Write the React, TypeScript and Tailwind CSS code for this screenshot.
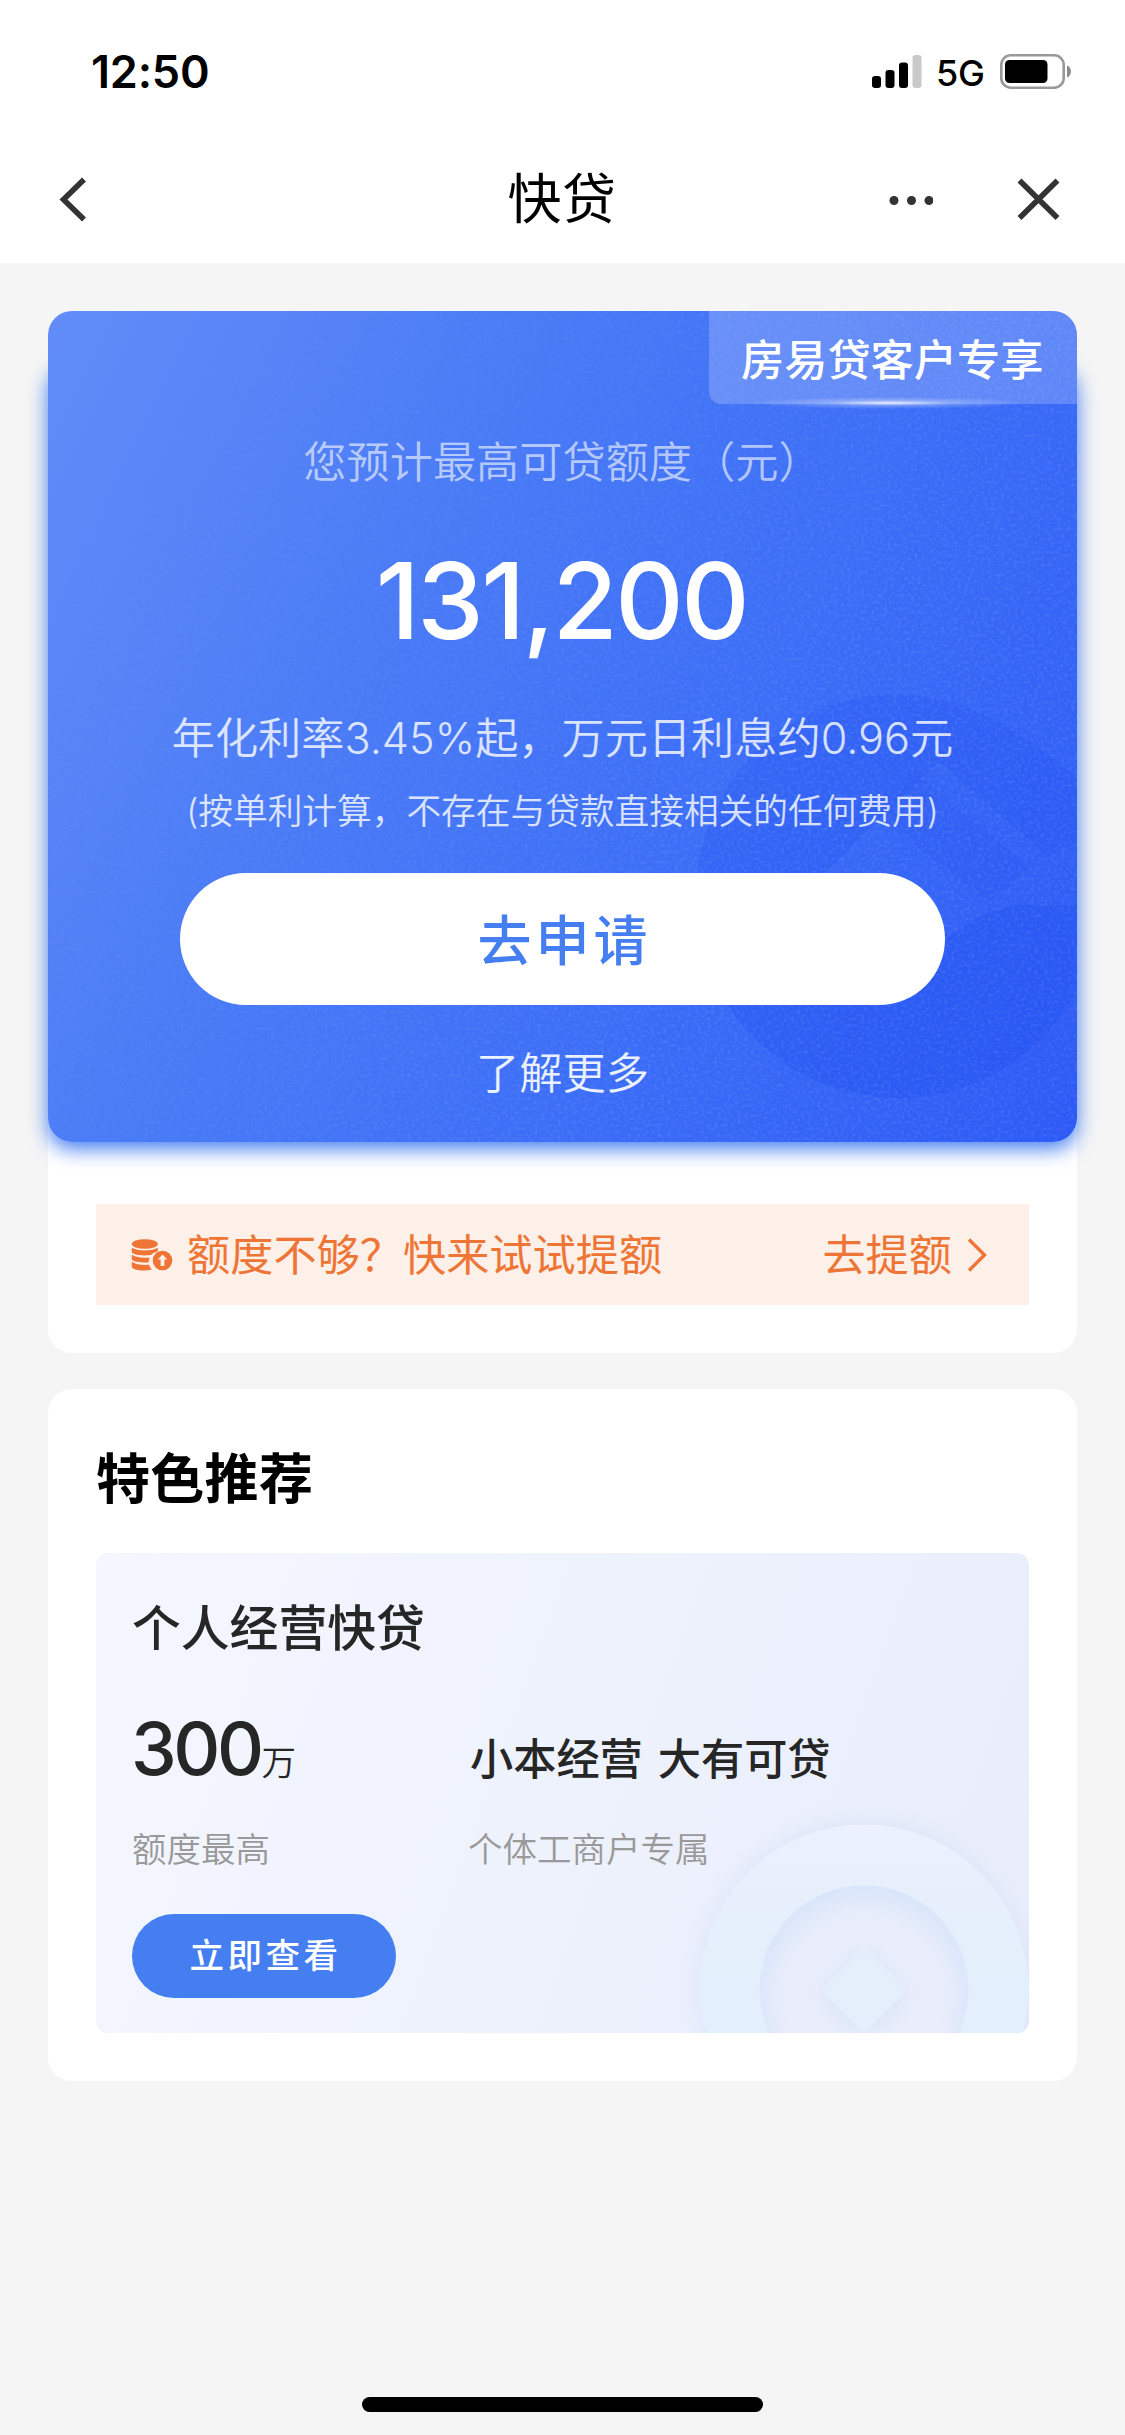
import React from "react";

const cjk = "font-['Inter','Noto_Sans_CJK_SC',sans-serif]";

function StatusBar() {
  return (
    <div className="flex h-[138px] items-start justify-between pl-[91px] pr-[50px] text-black">
      <span className="mt-[44px] text-[45px] font-semibold leading-[56px] tracking-[-0.2px]">12:50</span>
      <div className="mt-[50px] flex h-[42px] items-center">
        <svg className="h-[42px] w-[54px]" viewBox="0 0 54 42">
          <rect x="0" y="26" width="9" height="12" rx="3" />
          <rect x="13.5" y="20" width="9" height="18" rx="3" />
          <rect x="27" y="12.5" width="9" height="25.5" rx="3" />
          <rect x="40.5" y="5" width="9" height="33" rx="3" fill="#c9c9c9" />
        </svg>
        <span className="mt-[4px] w-[62px] pl-[10px] text-[36px] font-medium leading-[40px] tracking-[-0.2px]">5G</span>
        <svg className="ml-[11px] h-[42px] w-[76px]" viewBox="0 0 76 42">
          <rect x="2.3" y="5.3" width="62.4" height="32.4" rx="9.5" fill="none" stroke="#999" strokeWidth="2.6" />
          <rect x="6" y="10" width="42.5" height="23" rx="4.5" />
          <path d="M68 15.500c2.800 1.200 4 3.500 4 6s-1.200 4.800-4 6z" fill="#8c8c8c" />
        </svg>
      </div>
    </div>
  );
}

function NavBar() {
  return (
    <div className="flex h-[125px] items-start justify-between pl-[58px] pr-[64px] pt-[37px]">
      <svg className="h-[48px] w-[132px]" viewBox="0 0 132 48" fill="none" stroke="#333" strokeWidth="5.600">
        <path d="M26 4.500L5.500 24.500L26 44.500" />
      </svg>
      <h1 className="ml-[47px] mt-px text-[54px] font-normal leading-[48px] tracking-[0.500px] text-black">快贷</h1>
      <div className="flex h-[48px] w-[174px] items-center justify-between">
        <svg className="h-[48px] w-[46px]" viewBox="0 0 46 48" fill="#333">
          <circle cx="7" cy="25.500" r="4.500" />
          <circle cx="24.500" cy="25.500" r="4.500" />
          <circle cx="42" cy="25.500" r="4.500" />
        </svg>
        <svg className="h-[48px] w-[44px]" viewBox="0 0 44 48" fill="none" stroke="#333" strokeWidth="5.600">
          <path d="M2.500 5.500L40.500 43M40.500 5.500L2.500 43" />
        </svg>
      </div>
    </div>
  );
}

function CardArtwork() {
  return (
    <svg className="absolute inset-0 h-full w-full" viewBox="0 0 1029 831">
      <defs>
        <clipPath id="disc">
          <circle cx="850" cy="585" r="202" />
        </clipPath>
        <linearGradient id="fade" x1="0" y1="0" x2="1" y2="0.5">
          <stop offset="0.1" stopColor="#fff" stopOpacity="0.1" />
          <stop offset="0.8" stopColor="#fff" stopOpacity="1" />
        </linearGradient>
        <mask id="grainMask">
          <rect width="1029" height="831" fill="url(#fade)" />
        </mask>
        <filter id="grain" x="0" y="0" width="100%" height="100%">
          <feTurbulence type="fractalNoise" baseFrequency="0.3" numOctaves="2" seed="4" />
          <feColorMatrix values="0 0 0 0 1  0 0 0 0 1  0 0 0 0 1  0 1.400 0 0 -0.62" />
        </filter>
      </defs>
      <g clipPath="url(#disc)" fill="#1f4df0">
        <path d="M640 370H850L840 410L890 450L832 506L770 570V640H640z" opacity="0.22" />
        <path d="M640 640H880L930 606L965 594H1060V831H640z" opacity="0.3" />
      </g>
      <path d="M850 384C905 386 950 400 1029 468V530L1000 545L885 446L840 410z" fill="#1f4df0" opacity="0.22" />
      <path d="M868 462L982 556L940 592L832 506z" fill="#1f4df0" opacity="0.15" />
      <g mask="url(#grainMask)" opacity="0.17">
        <rect width="1029" height="831" filter="url(#grain)" />
      </g>
    </svg>
  );
}

function QuotaCard() {
  return (
    <div className="relative h-[831px]">
      <div className="absolute inset-x-0 bottom-0 top-[50px] rounded-[24px] shadow-[0_7px_20px_#447ef0]" />
      <div className="relative flex h-full flex-col items-center overflow-hidden rounded-[24px] bg-[linear-gradient(117deg,#628df8_0%,#4a7bf6_34%,#3a6cf7_66%,#2d5af5_100%)]">
        <CardArtwork />
        <div className="relative h-[93px] w-[368px] self-end rounded-bl-[12px] bg-white/20 pl-[32px] text-[43.2px] font-medium leading-[98px] text-white">
          <span className="whitespace-nowrap">房易贷客户专享</span>
          <div className="absolute bottom-[-5px] left-[40px] h-[12px] w-[280px] bg-[radial-gradient(closest-side,rgba(255,255,255,0.85),rgba(255,255,255,0.25)_45%,transparent)]" />
        </div>
        <p className="relative mt-[28px] text-[43.2px] font-[350] leading-[60px] text-white/60">您预计最高可贷额度（元）</p>
        <p className="relative mt-[49px] pr-[2px] text-[106px] font-medium leading-[120px] tracking-[-2.500px] text-white">131,200</p>
        <p className="relative mt-[47px] whitespace-nowrap text-[43.2px] font-[350] leading-[60px] text-white/80">
          年化利率<span className="font-light">3.45%</span>起，万元日利息约<span className="font-light">0.96</span>元
        </p>
        <p className="relative mt-[18px] whitespace-nowrap text-[34.700px] font-[350] leading-[50px] text-white/80">(按单利计算，不存在与贷款直接相关的任何费用)</p>
        <button className="relative mt-[37px] h-[132px] w-[765px] rounded-full bg-white pl-[4px] pt-[3px] text-[54px] font-medium leading-[132px] tracking-[4px] text-[#447ef0]">去申请</button>
        <a className="relative mt-[38px] text-[43.2px] font-[350] leading-[60px] text-white/90">了解更多</a>
      </div>
    </div>
  );
}

function RaiseQuotaRow() {
  return (
    <div className="mx-[48px] mt-[62px] flex h-[101px] items-center bg-[#fdf0e8] pl-[35px] pr-[41px] text-[43.2px] leading-[60px] text-[#ee7535]">
      <svg className="h-[32px] w-[42px]" viewBox="0 0 42 32" fill="#ee7535">
        <ellipse cx="13.800" cy="5" rx="13" ry="4.800" />
        <path d="M.8 8.600c5 3.800 21 3.800 26 0v3.800c-3.500.8-5.500 2.200-7 3.600-7 1-16 .6-19-2.400z" />
        <path d="M.8 15.700c4 2.900 11 3.400 18 2.700-.9 1.600-1.100 3.300-1.100 5-6 .4-14.400 0-16.900-2.800z" />
        <path d="M.8 22.800c4 2.900 11 3.500 17.200 3 .5 1.700 1.500 3.400 3 4.700C14 32.400 3.300 31.800.8 28.300z" />
        <circle cx="31.500" cy="21.500" r="9.800" />
        <path d="M31.500 15.500l4.800 5h-2.900v6.500h-3.800v-6.500h-2.900z" fill="#fdf0e8" />
      </svg>
      <span className="ml-[14px]">额度不够？快来试试提额</span>
      <span className="ml-auto">去提额</span>
      <svg className="ml-[14px] h-[36px] w-[22px]" viewBox="0 0 22 36" fill="none" stroke="#ee7535" strokeWidth="3.400">
        <path d="M3 2.500L18.500 18L3 33.500" />
      </svg>
    </div>
  );
}

function CoinArtwork() {
  return (
    <svg className="absolute inset-0 h-full w-full" viewBox="0 0 933 480">
      <defs>
        <linearGradient id="ring" x1="0" y1="0" x2="0" y2="1">
          <stop offset="0" stopColor="#ecf1fd" />
          <stop offset="0.2" stopColor="#e8effc" />
          <stop offset="0.5" stopColor="#e3effc" />
        </linearGradient>
        <radialGradient id="well" cx="0.5" cy="0.54" r="0.54">
          <stop offset="0.7" stopColor="#eaeefb" />
          <stop offset="1" stopColor="#d8e5fa" />
        </radialGradient>
        <filter id="soft" x="-30%" y="-30%" width="160%" height="160%">
          <feGaussianBlur stdDeviation="11" />
        </filter>
      </defs>
      <circle cx="768" cy="435" r="166" fill="#d5e0f8" opacity="0.75" filter="url(#soft)" />
      <circle cx="768" cy="436" r="164.500" fill="url(#ring)" />
      <circle cx="768" cy="437" r="104.500" fill="url(#well)" />
      <rect x="737" y="410" width="62" height="62" rx="5" transform="rotate(45 768 441)" fill="#cfdff8" opacity="0.8" filter="url(#soft)" />
      <rect x="737" y="406" width="62" height="62" rx="5" transform="rotate(45 768 437)" fill="#e5effc" />
    </svg>
  );
}

function FeaturedCard() {
  return (
    <section className="mt-[36px] h-[692px] rounded-[24px] bg-white px-[48px] pt-[61px]">
      <h2 className="text-[54px] font-bold leading-[60px] tracking-[0.300px] text-black">特色推荐</h2>
      <div className="relative mt-[43px] h-[480px] overflow-hidden rounded-[12px] bg-[linear-gradient(110deg,#f4f7ff_0%,#eef2fd_50%,#e9edfa_100%)] pl-[36px] text-[#262626]">
        <CoinArtwork />
        <div className="relative pt-[46px]">
          <h3 className="text-[48.800px] font-medium leading-[60px]">个人经营快贷</h3>
          <div className="mt-[48px] flex h-[84px] items-baseline">
            <div className="w-[338px] whitespace-nowrap">
              <span className="-ml-px text-[73px] font-medium leading-[84px] tracking-[-3.500px]">300</span>
              <span className="ml-px text-[34.500px] font-[350]">万</span>
            </div>
            <div className="whitespace-nowrap text-[43.2px] font-medium">
              小本经营<span className="inline-block w-[15px]" />大有可贷
            </div>
          </div>
          <div className="mt-[34px] flex text-[34.500px] font-[350] leading-[50px] text-[#999]">
            <div className="w-[336px]">额度最高</div>
            <div>个体工商户专属</div>
          </div>
          <button className="mt-[39px] h-[84px] w-[264px] rounded-full bg-[#447ef0] pl-[3px] text-[34.500px] font-medium leading-[80px] tracking-[3.500px] text-white">立即查看</button>
        </div>
      </div>
    </section>
  );
}

export default function App() {
  return (
    <div className={`flex h-[2435px] w-[1125px] flex-col overflow-hidden bg-[#f5f5f5] ${cjk}`}>
      <header className="h-[263px] shrink-0 bg-white">
        <StatusBar />
        <NavBar />
      </header>
      <main className="px-[48px] pt-[48px]">
        <section className="h-[1042px] rounded-[24px] bg-white">
          <QuotaCard />
          <RaiseQuotaRow />
        </section>
        <FeaturedCard />
      </main>
      <div className="mx-auto mb-[23px] mt-auto h-[15px] w-[401px] shrink-0 rounded-full bg-black" />
    </div>
  );
}
